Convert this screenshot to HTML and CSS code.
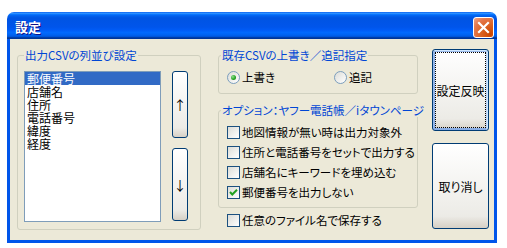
FILE: index.html
```html
<!DOCTYPE html>
<html lang="ja">

<head>
    <meta charset="UTF-8">
    <meta name="viewport" content="width=device-width, initial-scale=1.0">
    <title>設定</title>

    <link rel="stylesheet" href="styles.css">
</head>

<body>
    <div class="window">
        <div class="titlebar">
            <span class="title">設定</span>
            <button class="close">
                <svg width="13" height="13" viewBox="0 0 13 13">
                    <path d="M2 2 L11 11 M11 2 L2 11" stroke="#fff" stroke-width="2.2" stroke-linecap="square" />
                </svg>
            </button>
        </div>

        <div class="client">
            <fieldset class="group order">
                <legend>出力CSVの列並び設定</legend>
                <div class="order-body">
                    <ul class="listbox">
                        <li class="selected">郵便番号</li>
                        <li>店舗名</li>
                        <li>住所</li>
                        <li>電話番号</li>
                        <li>緯度</li>
                        <li>経度</li>
                    </ul>
                    <div class="move-buttons">
                        <button class="btn move up">↑</button>
                        <button class="btn move down">↓</button>
                    </div>
                </div>
            </fieldset>

            <div class="options">
                <fieldset class="group mode">
                    <legend>既存CSVの上書き／追記指定</legend>
                    <div class="radio-row">
                        <label class="option first"><span class="radio checked"></span>上書き</label>
                        <label class="option"><span class="radio"></span>追記</label>
                    </div>
                </fieldset>

                <fieldset class="group extra">
                    <legend>オプション：ヤフー電話帳／iタウンページ</legend>
                    <label class="option row"><span class="checkbox"></span>地図情報が無い時は出力対象外</label>
                    <label class="option row"><span class="checkbox"></span>住所と電話番号をセットで出力する</label>
                    <label class="option row"><span class="checkbox"></span>店舗名にキーワードを埋め込む</label>
                    <label class="option row">
                        <span class="checkbox">
                            <svg width="11" height="11" viewBox="0 0 11 11">
                                <path d="M2 5 L4.3 7.5 L9 2.8" fill="none" stroke="#21A121" stroke-width="2" />
                            </svg>
                        </span>郵便番号を出力しない
                    </label>
                </fieldset>

                <label class="option row standalone"><span class="checkbox"></span>任意のファイル名で保存する</label>
            </div>

            <div class="actions">
                <button class="btn action apply">設定反映</button>
                <button class="btn action cancel">取り消し</button>
            </div>
        </div>
    </div>
</body>

</html>
```

FILE: styles.css
```css
* {
    box-sizing: border-box;
}

body {
    margin: 0;
    background-color: #fff;
    font-family: "Noto Sans CJK JP", sans-serif;
    font-size: 11.5px;
    font-feature-settings: "palt";
    color: #000;
}

.window {
    width: 490px;
    margin: 12px 0 0 7px;
}

.titlebar {
    display: flex;
    align-items: center;
    justify-content: space-between;
    height: 27px;
    padding: 0 3px 0 8px;
    border-radius: 7px 7px 0 0;
    background: linear-gradient(180deg, #0058ee 0%, #3593ff 4%, #288eff 6%, #127dff 8%, #036ffc 10%, #0262ee 14%, #0057e5 20%, #0054e3 24%, #0055eb 56%, #005bf5 66%, #026afe 76%, #0062ef 86%, #0052d6 92%, #0040ab 94%, #003092 100%);
}

.title {
    padding-top: 2px;
    color: #fff;
    font-size: 13px;
    font-weight: bold;
    text-shadow: 1px 1px #0f1089;
}

.close {
    display: flex;
    align-items: center;
    justify-content: center;
    width: 21px;
    height: 21px;
    margin-top: 4px;
    padding: 0;
    border: 1px solid #fff;
    border-radius: 3px;
    background: radial-gradient(circle at 85% 85%, #cc4600 0%, #dc6527 45%, #e4764a 70%, #f0a488 100%);
}

.client {
    display: flex;
    align-items: flex-start;
    height: 204px;
    padding: 10px 0 0 7px;
    background-color: #ece9d8;
    border: 3px solid #0055ea;
    border-top: 0;
}

.group {
    margin: 0;
    min-width: 0;
    border: 1px solid #d0d0bf;
    border-radius: 3px;
}

.group legend {
    padding: 0 1px;
    line-height: 13px;
    white-space: nowrap;
    color: #0046d5;
}

.order {
    width: 184px;
    height: 181px;
    padding: 9px 6px 0 6px;
}

.order-body {
    display: flex;
    gap: 11px;
}

.listbox {
    width: 137px;
    height: 151px;
    margin: 0;
    padding: 0;
    list-style: none;
    background-color: #fff;
    border: 1px solid #7f9db9;
}

.listbox li {
    height: 13px;
    padding-left: 2px;
    line-height: 13px;
    font-size: 12px;
}

.listbox li.selected {
    background-color: #316ac5;
    color: #fff;
}

.move-buttons {
    display: flex;
    flex-direction: column;
    gap: 10px;
}

.btn {
    padding: 0;
    font: inherit;
    color: #000;
    border: 1px solid #003c74;
    border-radius: 3px;
    background: linear-gradient(180deg, #fff 0%, #ecebe6 86%, #d6d0c5 100%);
}

.move {
    width: 16px;
    font-size: 13px;
}

.move.up {
    height: 67px;
}

.move.down {
    height: 73px;
}

.options {
    display: flex;
    flex-direction: column;
    width: 200px;
    margin-left: 17px;
}

.mode {
    height: 45px;
    padding: 9px 0 0 2px;
}

.radio-row {
    display: flex;
    padding-left: 6px;
}

.option {
    display: flex;
    align-items: center;
    gap: 2px;
    line-height: 13px;
    white-space: nowrap;
}

.option.first {
    width: 107px;
}

.radio {
    position: relative;
    width: 13px;
    height: 13px;
    border: 1px solid #7b9ebd;
    border-radius: 50%;
    background: linear-gradient(135deg, #dcdcd7 0%, #fff 100%);
}

.radio.checked::after {
    content: "";
    position: absolute;
    left: 3px;
    top: 3px;
    width: 5px;
    height: 5px;
    border-radius: 50%;
    background: radial-gradient(circle at 35% 35%, #8ee08e 0%, #21a121 60%, #1a7d1a 100%);
}

.extra {
    height: 104px;
    margin-top: 10px;
    padding: 5px 0 0 2px;
}

.row {
    height: 20px;
    padding-left: 6px;
}

.checkbox {
    flex: none;
    width: 13px;
    height: 13px;
    border: 1px solid #1c5180;
    background: linear-gradient(135deg, #dcdcd7 0%, #fff 100%);
}

.checkbox svg {
    display: block;
}

.standalone {
    margin-top: 2px;
    padding-left: 9px;
}

.actions {
    display: flex;
    flex-direction: column;
    gap: 12px;
    width: 57px;
    margin-left: 14px;
}

.action {
    width: 57px;
    font-size: 12px;
}

.apply {
    height: 82px;
    box-shadow: inset -1px 1px #cee7ff, inset 1px 2px #98b8ea, inset -2px 2px #bcd4f6, inset 1px -1px #89ade4, inset 2px -2px #89ade4;
    outline: 1px dotted #000;
    outline-offset: -4px;
}

.cancel {
    height: 86px;
}
```
